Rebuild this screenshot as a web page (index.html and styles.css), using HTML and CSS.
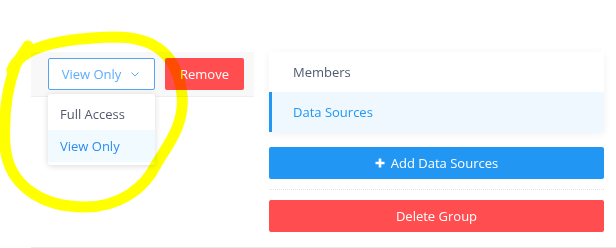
FILE: index.html
```html
<!doctype html>
<html lang="en">
<head>
    <meta charset="UTF-8">
    <title>Group Settings</title>
    <link rel="stylesheet" href="styles.css">
</head>
<body>
    <div class="page">
        <div class="left">
            <div class="toolbar">
                <div class="select-wrap">
                    <div class="select">
                        <span>View Only</span>
                        <svg class="chevron" width="8" height="5" viewBox="0 0 8 5"><path d="M0.5 0.5 L4 4 L7.5 0.5" fill="none" stroke="#5cadff" stroke-width="1"/></svg>
                    </div>
                    <ul class="dropdown">
                        <li>Full Access</li>
                        <li class="selected">View Only</li>
                    </ul>
                </div>
                <button class="btn btn-red btn-remove">Remove</button>
            </div>
        </div>
        <div class="right">
            <ul class="menu">
                <li>Members</li>
                <li class="active">Data Sources</li>
            </ul>
            <button class="btn btn-blue btn-wide">
                <svg class="plus" width="10" height="10" viewBox="0 0 10 10"><path d="M5 0.5 V9.5 M0.5 5 H9.5" stroke="#fff" stroke-width="2.6"/></svg>
                Add Data Sources
            </button>
            <div class="dots"></div>
            <button class="btn btn-red btn-wide">Delete Group</button>
        </div>
    </div>
    <!-- hand-drawn highlight over the dropdown -->
    <svg class="scribble" width="200" height="220" viewBox="0 0 200 220">
        <path d="M12 70 C22 44 70 38 115 37 C158 37 178 58 182 95 C185 124 168 145 157 163 C144 190 118 207 85 207 C45 207 8 188 5 145 C3 110 8 85 16 64 L28 46" fill="none" stroke="#ffff00" stroke-width="11" stroke-linecap="round" stroke-linejoin="round"/>
    </svg>
</body>
</html>
```
FILE: styles.css
```css
body{
    margin: 0;
    font-family: "Open Sans", "Noto Sans", sans-serif;
    font-size: 13px;
    color: #515a6e;
    background: #fff;
}
.page{
    display: flex;
    margin: 52px 0 0 31px;
    height: 195px;
    border-bottom: 1px solid #e8eaec;
}
.left{
    width: 223px;
}
.toolbar{
    display: flex;
    align-items: center;
    gap: 10px;
    height: 44px;
    padding-left: 17px;
    background: #f8f8f9;
    border-bottom: 1px solid #eeeff1;
}
.select-wrap{
    position: relative;
}
.select{
    display: flex;
    align-items: center;
    justify-content: center;
    gap: 10px;
    box-sizing: border-box;
    width: 107px;
    height: 32px;
    padding-right: 2px;
    background: #fff;
    border: 1px solid #57a3f3;
    border-radius: 2px;
    color: #5cadff;
}
.chevron{
    margin-top: 1px;
}
.dropdown{
    position: absolute;
    top: 36px;
    left: 0;
    width: 107px;
    margin: 0;
    padding: 4px 0 3px;
    list-style: none;
    background: #fff;
    border-radius: 3px;
    box-shadow: 0 1px 6px rgba(0, 0, 0, 0.15);
    z-index: 2;
}
.dropdown li{
    height: 32px;
    line-height: 32px;
    padding-left: 12px;
}
.dropdown li.selected{
    background: #f0faff;
    color: #2d8cf0;
}
.btn{
    border: none;
    border-radius: 2px;
    font-family: inherit;
    font-size: 13px;
    color: #fff;
    height: 32px;
    cursor: pointer;
}
.btn-red{
    background: #ff4d50;
}
.btn-blue{
    background: #2196f3;
}
.btn-remove{
    width: 79px;
}
.right{
    width: 335px;
    margin-left: 15px;
}
.menu{
    margin: 0;
    padding: 0;
    list-style: none;
    background: #fff;
    box-shadow: 0 2px 8px rgba(0, 0, 0, 0.06);
}
.menu li{
    height: 40px;
    line-height: 40px;
    padding-left: 24px;
}
.menu li.active{
    background: #eef8fe;
    color: #2196f3;
    border-left: 3px solid #2196f3;
    padding-left: 21px;
}
.btn-wide{
    display: flex;
    align-items: center;
    justify-content: center;
    gap: 6px;
    width: 100%;
    margin-top: 15px;
}
.dots{
    margin-top: 10px;
    border-top: 1px dotted #dfe2e6;
}
.dots + .btn-wide{
    margin-top: 10px;
}
.scribble{
    position: absolute;
    top: 0;
    left: 0;
    mix-blend-mode: multiply;
    z-index: 3;
}
```
